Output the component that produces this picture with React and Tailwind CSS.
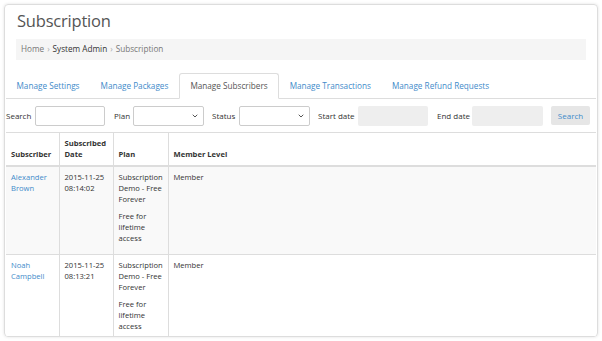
import { ChevronDown } from 'lucide-react'

const tabs = [
  'Manage Settings',
  'Manage Packages',
  'Manage Subscribers',
  'Manage Transactions',
  'Manage Refund Requests',
]

const rows = [
  { name: ['Alexander', 'Brown'], date: ['2015-11-25', '08:14:02'], striped: true },
  { name: ['Noah', 'Campbell'], date: ['2015-11-25', '08:13:21'], striped: false },
]

function Select({ width }) {
  return (
    <div
      className={`flex items-center justify-end h-[20px] border border-[#ccc] rounded-[2px] bg-white pr-[4px] ${width}`}
    >
      <ChevronDown size={8} strokeWidth={3} className="text-[#555]" />
    </div>
  )
}

export default function App() {
  return (
    <div className="w-[602px] h-[341px] bg-white p-[4px] font-['Open_Sans',sans-serif] text-[#333]">
      <div className="h-[333px] rounded-[4px] border border-[#ddd] shadow-[0_0_3px_rgba(0,0,0,0.12)] overflow-hidden pt-[6px]">
        {/* Header */}
        <div className="px-[11px]">
          <h1 className="text-[16.5px] leading-[20px] text-[#555] pl-[1px] tracking-[-0.2px]">
            Subscription
          </h1>
          <div className="mt-[8px] h-[21px] bg-[#f5f5f5] flex items-center px-[5px] text-[8.2px] text-[#777] gap-[3px]">
            <span>Home</span>
            <span className="text-[#aaa]">›</span>
            <span className="text-[#333]">System Admin</span>
            <span className="text-[#aaa]">›</span>
            <span>Subscription</span>
          </div>
        </div>

        {/* Tabs */}
        <div className="mt-[13px] mx-[1px] flex items-end h-[26px] border-b border-[#ddd]">
          {tabs.map((t, i) =>
            i === 2 ? (
              <div
                key={t}
                className="h-[26px] -mb-px px-[10.5px] flex items-center bg-white border border-[#ddd] border-b-white rounded-t-[3px] text-[8.2px] text-[#555]"
              >
                {t}
              </div>
            ) : (
              <div
                key={t}
                className="h-[25px] px-[10.5px] pt-[1px] flex items-center text-[8.2px] text-[#428bca]"
              >
                {t}
              </div>
            )
          )}
        </div>

        {/* Filters */}
        <div className="mx-[1px] flex items-center h-[34px] border-b border-[#ddd] text-[8px] text-[#333]">
          <span className="w-[29px]">Search</span>
          <div className="w-[70px] h-[20px] border border-[#ccc] rounded-[2px]" />
          <span className="ml-[9px] w-[19px]">Plan</span>
          <Select width="w-[71px]" />
          <span className="ml-[8px] w-[27px]">Status</span>
          <Select width="w-[71px]" />
          <span className="ml-[8px] w-[40px]">Start date</span>
          <div className="w-[70px] h-[20px] bg-[#eee] rounded-[2px]" />
          <span className="ml-[9px] w-[35px]">End date</span>
          <div className="w-[71px] h-[20px] bg-[#eee] rounded-[2px]" />
          <button className="ml-[8px] w-[39px] h-[19px] bg-[#e6e6e6] rounded-[2px] text-[#428bca] text-[8px]">
            Search
          </button>
        </div>

        {/* Table */}
        <table className="mx-[1px] w-[590px] border-collapse text-[7.6px] leading-[11px] table-fixed">
          <colgroup>
            <col className="w-[53px]" />
            <col className="w-[54px]" />
            <col className="w-[55px]" />
            <col />
          </colgroup>
          <thead>
            <tr className="h-[33px]">
              <th className="border-r border-[#ddd] border-b-2 align-bottom text-left font-bold text-[#333] pl-[5px] pr-[2px] pb-[5px]">
                Subscriber
              </th>
              <th className="border-r border-[#ddd] border-b-2 align-bottom text-left font-bold text-[#333] pl-[5px] pr-[2px] pb-[5px]">
                Subscribed
                <br />
                Date
              </th>
              <th className="border-r border-[#ddd] border-b-2 align-bottom text-left font-bold text-[#333] pl-[5px] pr-[2px] pb-[5px]">
                Plan
              </th>
              <th className="border-[#ddd] border-b-2 align-bottom text-left font-bold text-[#333] pl-[5px] pb-[5px]">
                Member Level
              </th>
            </tr>
          </thead>
          <tbody>
            {rows.map((r, i) => (
              <tr key={i} className={`${r.striped ? 'bg-[#f9f9f9]' : 'bg-white'} border-b border-[#ddd]`}>
                <td className="border-r border-[#ddd] align-top pl-[5px] pr-[2px] pt-[5px] pb-[10px] text-[#428bca]">
                  {r.name[0]}
                  <br />
                  {r.name[1]}
                </td>
                <td className="border-r border-[#ddd] align-top pl-[5px] pr-[2px] pt-[5px] pb-[10px]">
                  {r.date[0]}
                  <br />
                  {r.date[1]}
                </td>
                <td className="border-r border-[#ddd] align-top pl-[5px] pr-[2px] pt-[5px] pb-[10px]">
                  <p>Subscription Demo - Free Forever</p>
                  <p className="mt-[6px]">Free for lifetime access</p>
                </td>
                <td className="align-top pl-[5px] pt-[5px] pb-[10px]">Member</td>
              </tr>
            ))}
          </tbody>
        </table>
      </div>
    </div>
  )
}
